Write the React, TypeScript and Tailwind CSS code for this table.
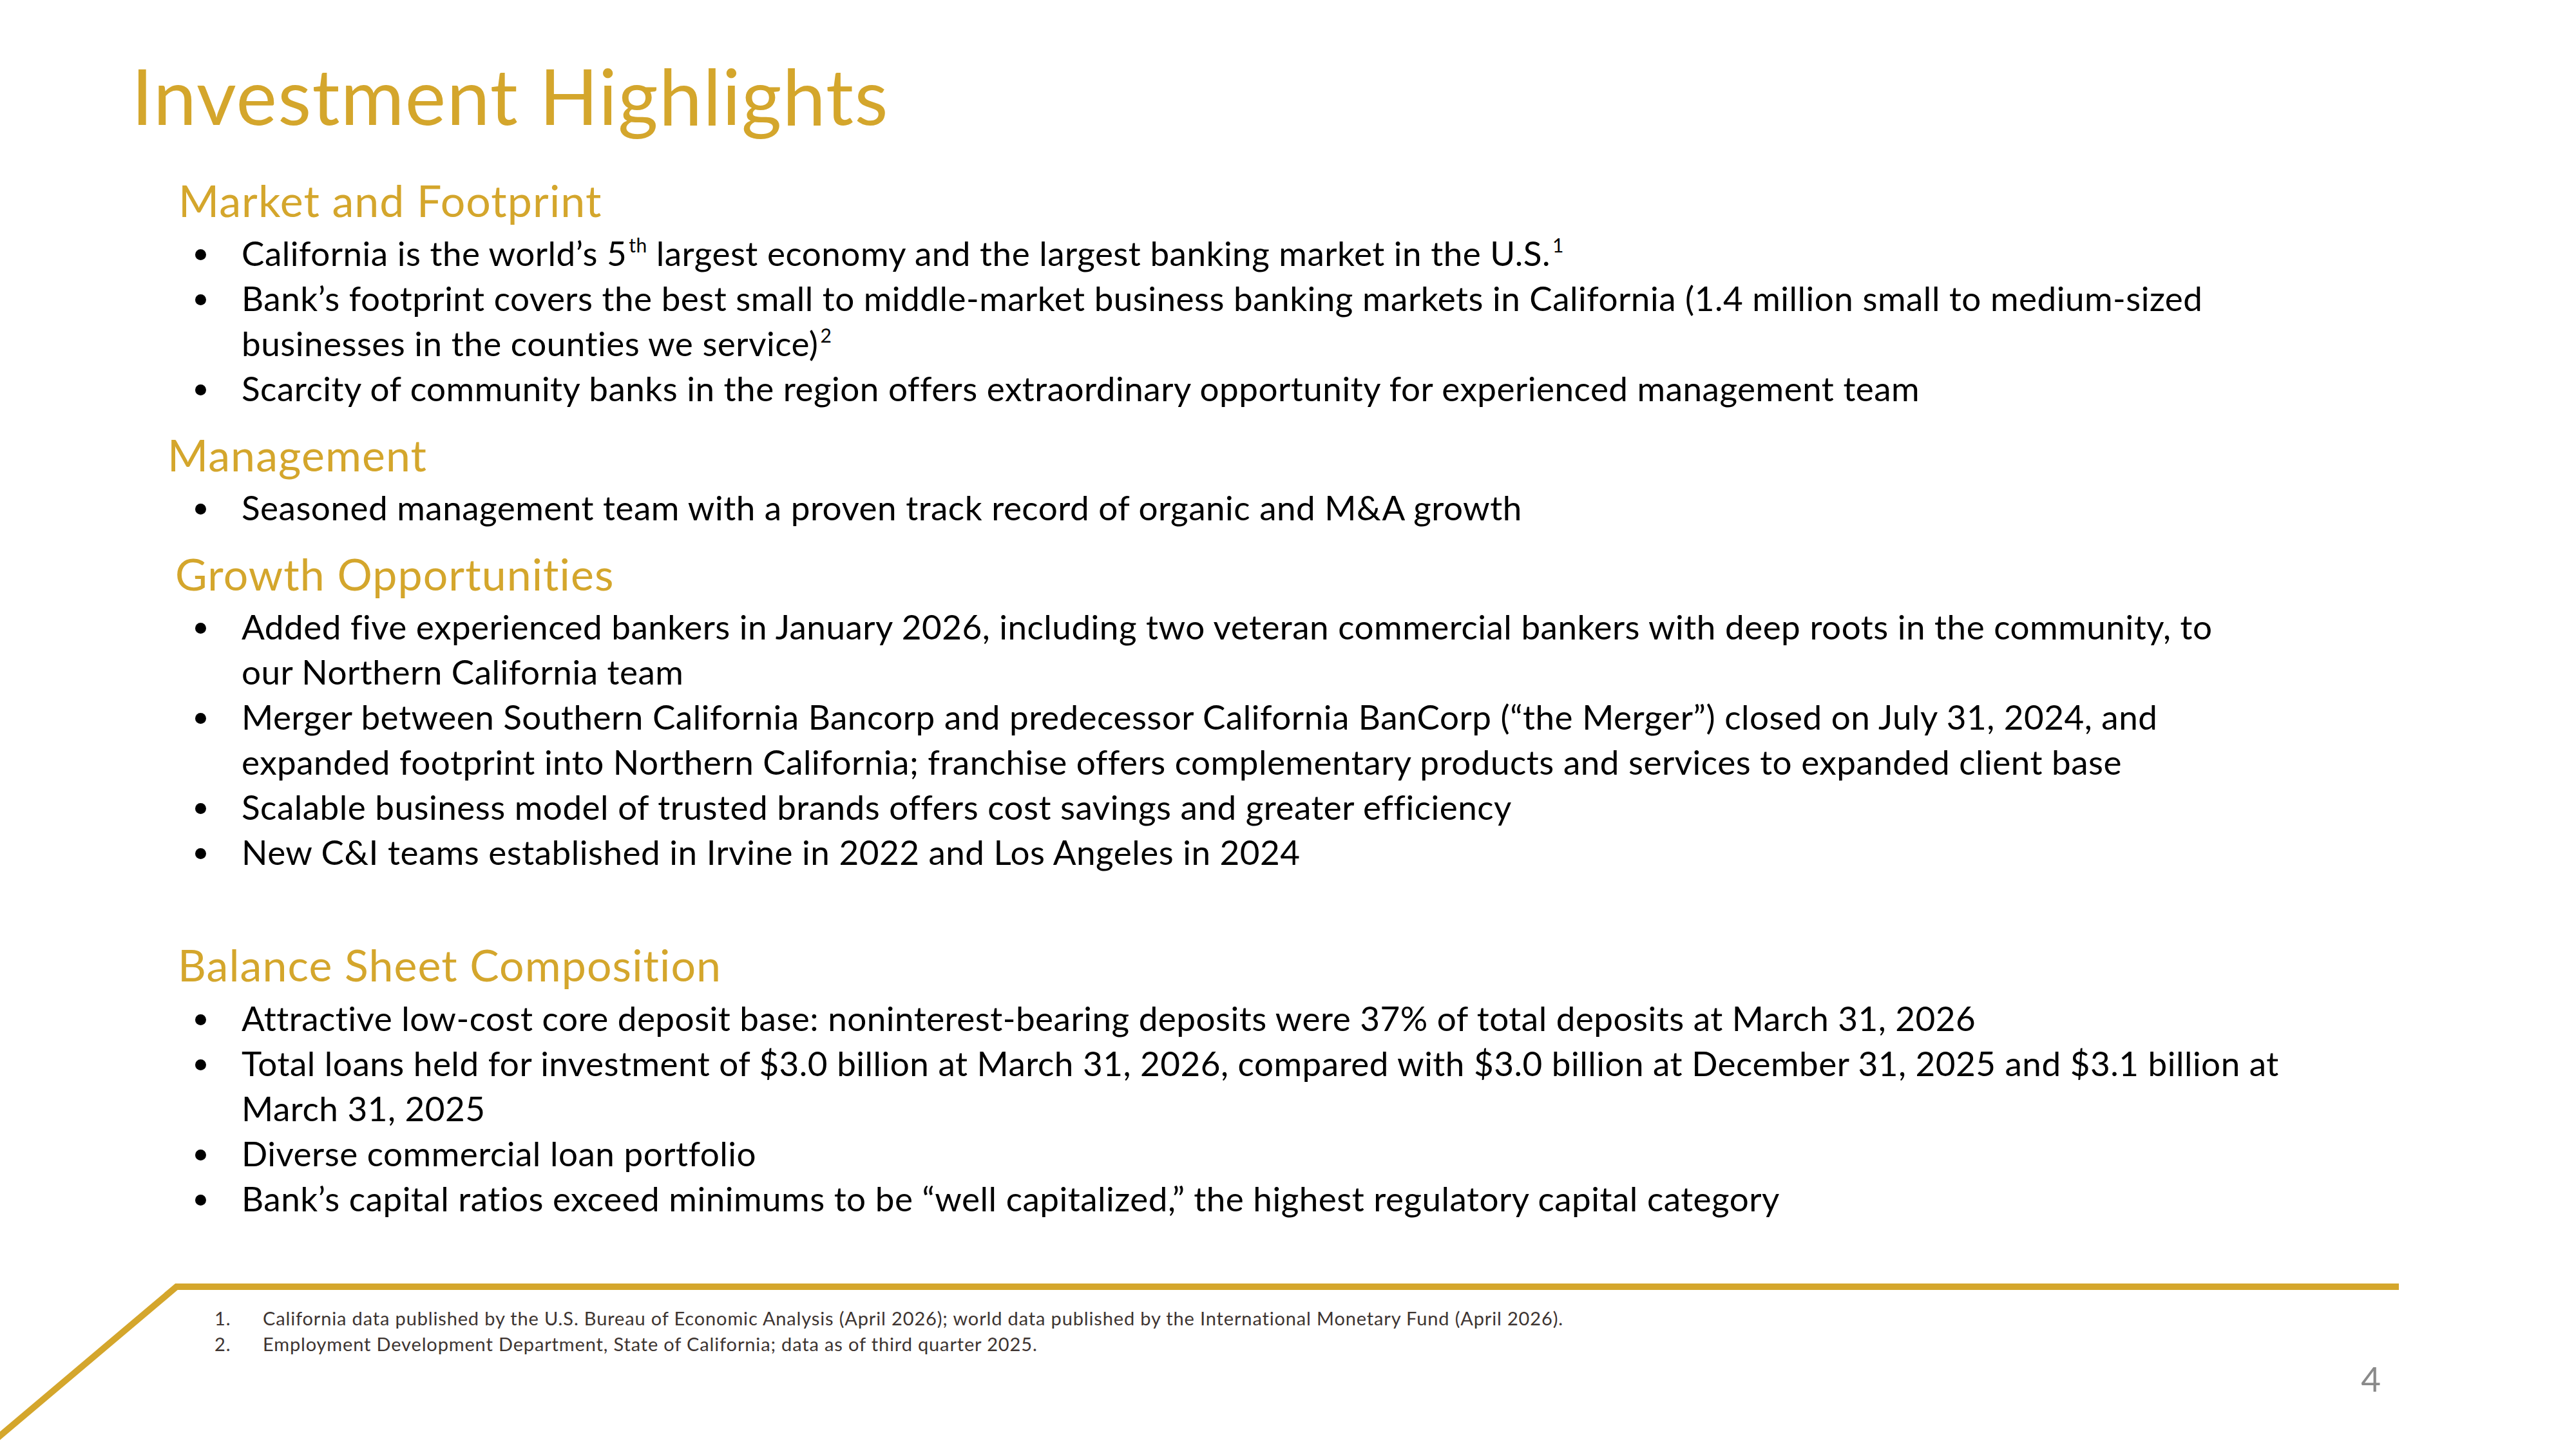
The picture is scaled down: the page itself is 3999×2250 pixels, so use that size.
import React from 'react';

const GOLD = 'text-[#d4a62c]';

function Bullet({ children }: { children: React.ReactNode }) {
  return (
    <div className="flex items-start">
      <span className="ml-[303px] mt-[29px] h-[17px] w-[17px] shrink-0 rounded-full bg-black" />
      <p className="ml-[55px] whitespace-nowrap">{children}</p>
    </div>
  );
}

function Sup({ children }: { children: React.ReactNode }) {
  return <sup className="-top-[21px] ml-[3px] text-[30px]">{children}</sup>;
}

function App() {
  return (
    <div className="relative h-[2250px] w-[3999px] overflow-hidden bg-white font-['Lato',sans-serif] [font-variant-ligatures:none]">
      <div className="flex flex-col">
        <h1 className={`ml-[204px] mt-[78px] text-[120px] leading-[140px] tracking-[1.3px] ${GOLD}`}>Investment Highlights</h1>

        <h2 className={`ml-[277px] mt-[53px] text-[68px] leading-[80px] tracking-[1.1px] ${GOLD}`}>Market and Footprint</h2>
        <div className="mt-[7px] text-[53px] leading-[70px] tracking-[0.5px] text-black">
          <Bullet>
            California is the world’s 5<Sup>th</Sup> largest economy and the largest banking market in the U.S.<Sup>1</Sup>
          </Bullet>
          <Bullet>
            Bank’s footprint covers the best small to middle-market business banking markets in California (1.4 million small to medium-sized
            <br />
            businesses in the counties we service)<Sup>2</Sup>
          </Bullet>
          <Bullet>Scarcity of community banks in the region offers extraordinary opportunity for experienced management team</Bullet>
        </div>

        <h2 className={`ml-[260px] mt-[28px] text-[68px] leading-[80px] tracking-[1.1px] ${GOLD}`}>Management</h2>
        <div className="mt-[7px] text-[53px] leading-[70px] tracking-[0.5px] text-black">
          <Bullet>Seasoned management team with a proven track record of organic and M&amp;A growth</Bullet>
        </div>

        <h2 className={`ml-[272px] mt-[28px] text-[68px] leading-[80px] tracking-[1.1px] ${GOLD}`}>Growth Opportunities</h2>
        <div className="mt-[7px] text-[53px] leading-[70px] tracking-[0.5px] text-black">
          <Bullet>
            Added five experienced bankers in January 2026, including two veteran commercial bankers with deep roots in the community, to
            <br />
            our Northern California team
          </Bullet>
          <Bullet>
            Merger between Southern California Bancorp and predecessor California BanCorp (“the Merger”) closed on July 31, 2024, and
            <br />
            expanded footprint into Northern California; franchise offers complementary products and services to expanded client base
          </Bullet>
          <Bullet>Scalable business model of trusted brands offers cost savings and greater efficiency</Bullet>
          <Bullet>New C&amp;I teams established in Irvine in 2022 and Los Angeles in 2024</Bullet>
        </div>

        <h2 className={`ml-[276px] mt-[100px] text-[68px] leading-[80px] tracking-[1.1px] ${GOLD}`}>Balance Sheet Composition</h2>
        <div className="mt-[8px] text-[53px] leading-[70px] tracking-[0.5px] text-black">
          <Bullet>Attractive low-cost core deposit base: noninterest-bearing deposits were 37% of total deposits at March 31, 2026</Bullet>
          <Bullet>
            Total loans held for investment of $3.0 billion at March 31, 2026, compared with $3.0 billion at December 31, 2025 and $3.1 billion at
            <br />
            March 31, 2025
          </Bullet>
          <Bullet>Diverse commercial loan portfolio</Bullet>
          <Bullet>Bank’s capital ratios exceed minimums to be “well capitalized,” the highest regulatory capital category</Bullet>
        </div>

        <div className="ml-[288px] mt-[97px] h-[10px] w-[3436px] bg-[#d4a62c]" />

        <ol className="ml-[333px] mt-[24px] text-[29px] leading-[40px] tracking-[0.85px] text-[#3d3431]">
          <li className="flex">
            <span className="w-[75px]">1.</span>
            <span>California data published by the U.S. Bureau of Economic Analysis (April 2026); world data published by the International Monetary Fund (April 2026).</span>
          </li>
          <li className="flex">
            <span className="w-[75px]">2.</span>
            <span>Employment Development Department, State of California; data as of third quarter 2025.</span>
          </li>
        </ol>

        <div className="mt-[4px] pr-[303px] text-right text-[53px] leading-[60px] text-[#8a8a8a]">4</div>
      </div>

      <svg className="absolute left-0 top-[1990px] h-[270px] w-[320px]" viewBox="0 0 320 270">
        <polyline points="-36,270 274,8 310,8" fill="none" stroke="#d4a62c" strokeWidth="10" strokeLinejoin="miter" />
      </svg>
    </div>
  );
}

export default App;
